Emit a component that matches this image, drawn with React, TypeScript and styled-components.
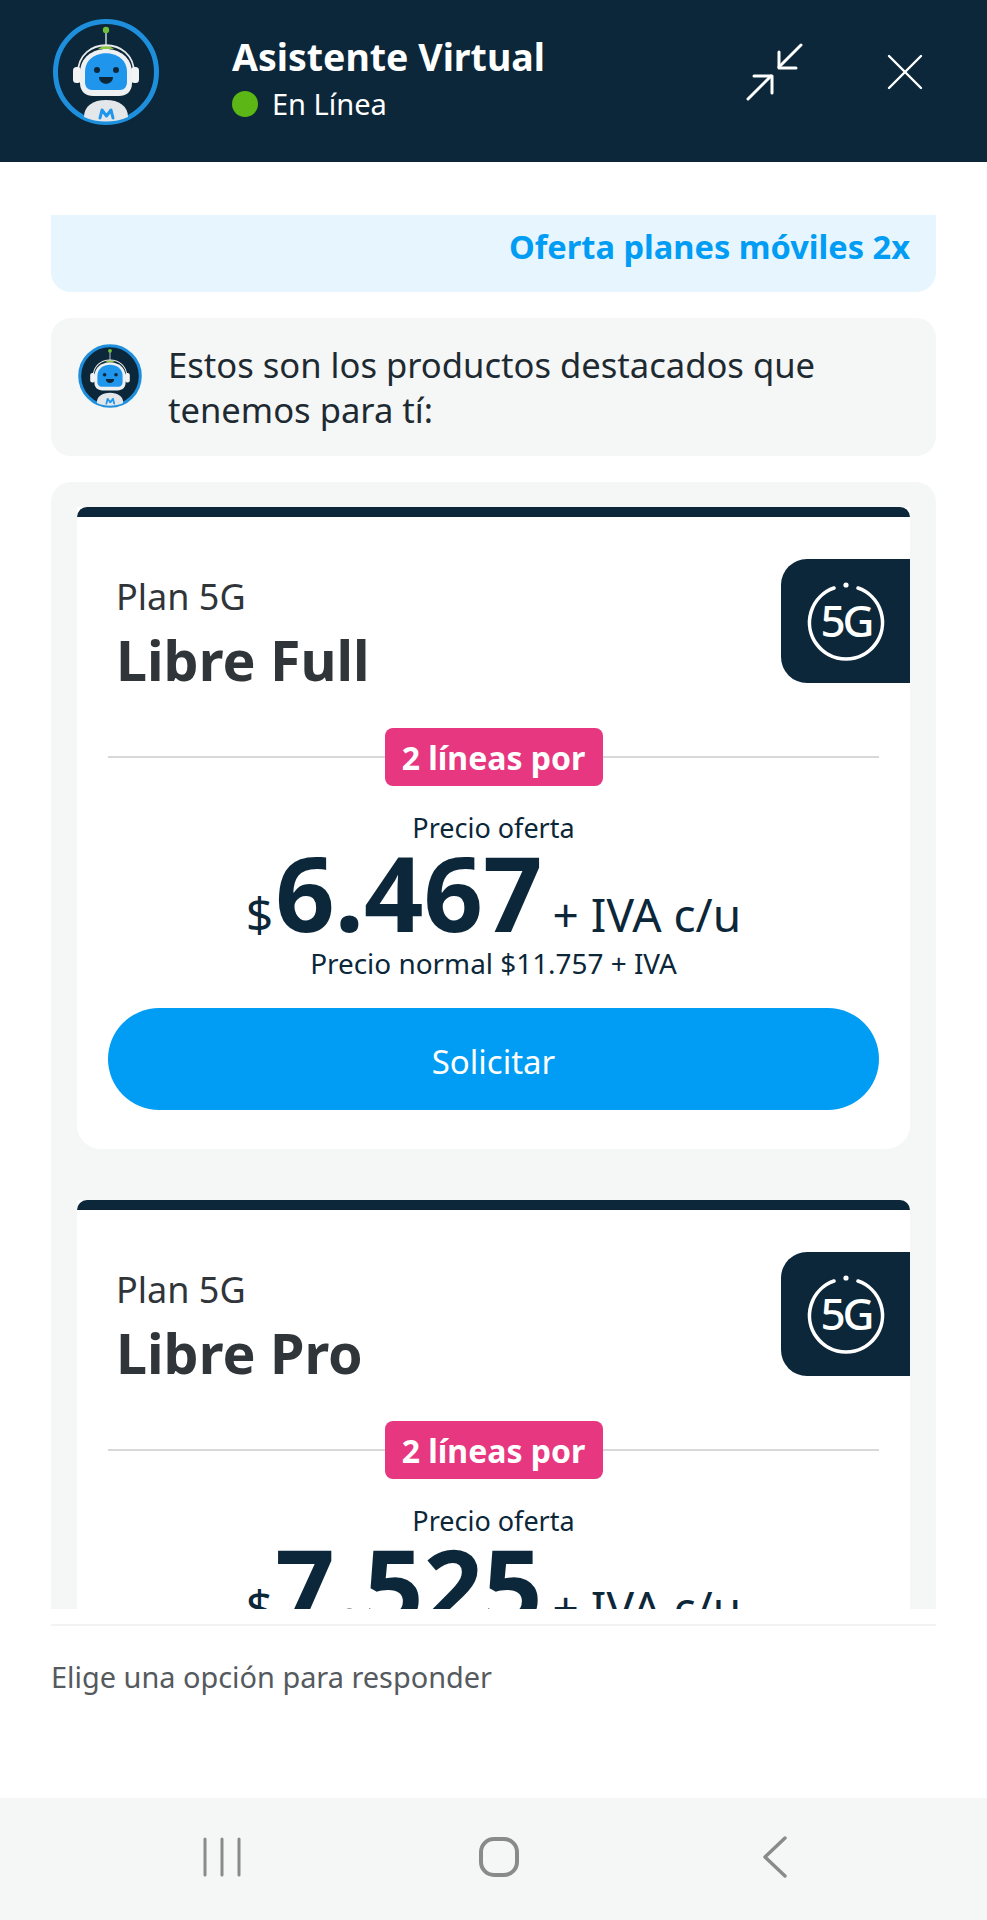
import styled, { createGlobalStyle } from "styled-components";

const NAVY = "#0b2739";
const BLUE = "#019df4";
const GRAY_BG = "#f5f6f6";
const FONT = '"Noto Sans", "Open Sans", sans-serif';

const plans = [
  { name: "Libre Full", price: "6.467", normal: "$11.757" },
  { name: "Libre Pro", price: "7.525", normal: "$13.682" },
];

function RobotAvatar({ size, ringWidth }: { size: number; ringWidth: number }) {
  return (
    <svg width={size} height={size} viewBox="0 0 110 110" aria-hidden="true">
      <circle cx="55" cy="55" r={53 - ringWidth / 2} fill={NAVY} stroke="#1e8fdc" strokeWidth={ringWidth} />
      <line x1="55" y1="15" x2="55" y2="29" stroke="#9aa7ad" strokeWidth="2" />
      <circle cx="55" cy="13" r="3.2" fill="#6fbf3a" />
      <path d="M47 32 Q55 25 63 32 Z" fill="#8cc63f" />
      <path d="M27 56 C27 19 83 19 83 56" fill="none" stroke="#e8eaec" strokeWidth="1.8" />
      <rect x="22" y="50" width="8" height="16" rx="3.5" fill="#f2f3f4" />
      <rect x="80" y="50" width="8" height="16" rx="3.5" fill="#f2f3f4" />
      <path d="M29 56 C29 24 81 24 81 56 V66 C81 75 75 79 68 79 H42 C35 79 29 75 29 66 Z" fill="#eef0f2" />
      <path d="M34 55 C34 30 76 30 76 55 V65 C76 70 73 73 69 73 H41 C37 73 34 70 34 65 Z" fill="#1f96ec" />
      <circle cx="46" cy="53" r="3" fill={NAVY} />
      <circle cx="65" cy="53" r="3" fill={NAVY} />
      <path d="M48 60 H62 C62 69 48 69 48 60 Z" fill={NAVY} />
      <path d="M33 100 C33 89 42 83 55 83 C68 83 77 89 77 100 C64 106 46 106 33 100 Z" fill="#e4e7ea" />
      <path d="M49 101 L51 93 L55.5 99 L60 93 L62 101" fill="none" stroke="#1f96ec" strokeWidth="3" strokeLinejoin="round" strokeLinecap="round" />
    </svg>
  );
}

function CompressIcon() {
  return (
    <svg width="58" height="58" viewBox="0 0 58 58" fill="none" stroke="#fff" strokeWidth="3" strokeLinecap="round" strokeLinejoin="round">
      <path d="M55 2 L33 24" />
      <path d="M33 9 V25 H50" />
      <path d="M2 56 L25 33" />
      <path d="M8 33 H26 V50" />
    </svg>
  );
}

function CloseIcon() {
  return (
    <svg width="36" height="36" viewBox="0 0 36 36" fill="none" stroke="#fff" strokeWidth="2.4" strokeLinecap="round">
      <path d="M2 2 L34 34" />
      <path d="M34 2 L2 34" />
    </svg>
  );
}

function FiveGIcon() {
  return (
    <svg width="80" height="80" viewBox="0 0 80 80" fill="none">
      <path d="M28 7 A36.5 36.5 0 1 0 52 7" stroke="#fff" strokeWidth="3.6" strokeLinecap="round" />
      <circle cx="40" cy="4" r="2.6" fill="#fff" />
      <text x="40" y="56" textAnchor="middle" fill="#fff" fontFamily={FONT} fontSize="44" fontWeight="500" letterSpacing="-3">
        5G
      </text>
    </svg>
  );
}

export default function App() {
  return (
    <Screen>
      <GlobalStyle />
      <Header>
        <AvatarSlot>
          <RobotAvatar size={110} ringWidth={5} />
        </AvatarSlot>
        <HeaderText>
          <HeaderTitle>Asistente Virtual</HeaderTitle>
          <Status>
            <StatusDot />
            En Línea
          </Status>
        </HeaderText>
        <HeaderActions>
          <CompressIcon />
          <CloseIcon />
        </HeaderActions>
      </Header>

      <Chat>
        <Banner>Oferta planes móviles 2x</Banner>
        <Message>
          <MessageAvatar>
            <RobotAvatar size={66} ringWidth={5} />
          </MessageAvatar>
          <MessageText>Estos son los productos destacados que tenemos para tí:</MessageText>
        </Message>
        <Products>
          {plans.map((plan) => (
            <PlanCard key={plan.name}>
              <CardStripe />
              <PlanHead>
                <PlanTitles>
                  <PlanKind>Plan 5G</PlanKind>
                  <PlanName>{plan.name}</PlanName>
                </PlanTitles>
                <FiveGBadge>
                  <FiveGIcon />
                </FiveGBadge>
              </PlanHead>
              <DividerRow>
                <Pill>2 líneas por</Pill>
              </DividerRow>
              <OfferLabel>Precio oferta</OfferLabel>
              <PriceRow>
                <Currency>$</Currency>
                <Amount>{plan.price}</Amount>
                <PriceSuffix>+ IVA c/u</PriceSuffix>
              </PriceRow>
              <NormalPrice>Precio normal {plan.normal} + IVA</NormalPrice>
              <RequestButton>Solicitar</RequestButton>
            </PlanCard>
          ))}
        </Products>
      </Chat>

      <Footer>
        <FooterHint>Elige una opción para responder</FooterHint>
      </Footer>

      <NavBar>
        <svg width="40" height="40" viewBox="0 0 40 40" stroke="#8a8a8a" strokeWidth="3" strokeLinecap="round">
          <path d="M3 2 V38 M20 2 V38 M37 2 V38" />
        </svg>
        <svg width="42" height="40" viewBox="0 0 42 40" fill="none" stroke="#8a8a8a" strokeWidth="4">
          <rect x="3" y="2" width="36" height="36" rx="13" />
        </svg>
        <svg width="32" height="42" viewBox="0 0 32 42" fill="none" stroke="#8a8a8a" strokeWidth="3.4" strokeLinecap="round" strokeLinejoin="round">
          <path d="M30 2 L10 21 L30 40" />
        </svg>
      </NavBar>
    </Screen>
  );
}

const GlobalStyle = createGlobalStyle`
  html, body {
    margin: 0;
    padding: 0;
    background: #fff;
  }

  * {
    box-sizing: border-box;
  }
`;

const Screen = styled.div`
  width: 987px;
  height: 1920px;
  display: flex;
  flex-direction: column;
  overflow: hidden;
  font-family: ${FONT};
  color: ${NAVY};
`;

const Header = styled.header`
  flex: none;
  height: 162px;
  padding: 0 64px 0 51px;
  display: flex;
  align-items: center;
  background: ${NAVY};
`;

const AvatarSlot = styled.div`
  display: flex;
  margin-top: -18px;
`;

const HeaderText = styled.div`
  margin-left: 71px;
  margin-top: -5px;
  flex: 1;
  display: flex;
  flex-direction: column;
`;

const HeaderTitle = styled.div`
  font-size: 37.5px;
  line-height: 50px;
  font-weight: 700;
  color: #fff;
`;

const Status = styled.div`
  display: flex;
  align-items: center;
  gap: 14px;
  font-size: 29px;
  line-height: 44px;
  color: #fff;
`;

const StatusDot = styled.span`
  width: 26px;
  height: 26px;
  border-radius: 50%;
  background: #5cb615;
`;

const HeaderActions = styled.div`
  display: flex;
  align-items: center;
  gap: 83px;
  margin-top: -18px;
`;

const Chat = styled.main`
  flex: none;
  height: 1447px;
  padding: 53px 51px 0;
  display: flex;
  flex-direction: column;
  gap: 26px;
  overflow: hidden;
`;

const Banner = styled.div`
  flex: none;
  height: 77px;
  padding: 0 26px 14px;
  display: flex;
  align-items: center;
  justify-content: flex-end;
  background: #e6f5fe;
  border-radius: 0 0 20px 20px;
  font-size: 32.6px;
  font-weight: 700;
  color: ${BLUE};
`;

const Message = styled.div`
  flex: none;
  height: 138px;
  padding: 0 26px;
  display: flex;
  align-items: center;
  gap: 25px;
  background: ${GRAY_BG};
  border-radius: 20px;
`;

const MessageAvatar = styled.div`
  flex: none;
  display: flex;
  margin-top: -22px;
`;

const MessageText = styled.p`
  margin: 0;
  max-width: 680px;
  font-size: 34.6px;
  line-height: 45px;
  color: #1e2a32;
`;

const Products = styled.section`
  flex: 1;
  min-height: 0;
  padding: 25px 26px 0;
  display: flex;
  flex-direction: column;
  gap: 51px;
  background: ${GRAY_BG};
  border-radius: 20px 20px 0 0;
  overflow: hidden;
`;

const PlanCard = styled.article`
  flex: none;
  height: 642px;
  display: flex;
  flex-direction: column;
  align-items: center;
  background: #fff;
  border-radius: 0 0 24px 24px;
`;

const CardStripe = styled.div`
  align-self: stretch;
  height: 10px;
  background: ${NAVY};
  border-radius: 12px 12px 0 0;
`;

const PlanHead = styled.div`
  align-self: stretch;
  margin-top: 42px;
  padding-left: 39px;
  display: flex;
  justify-content: space-between;
  align-items: flex-start;
`;

const PlanTitles = styled.div`
  display: flex;
  flex-direction: column;
  padding-top: 16px;
`;

const PlanKind = styled.div`
  font-size: 36px;
  line-height: 44px;
  color: #30353a;
`;

const PlanName = styled.div`
  margin-top: 5px;
  font-size: 55.5px;
  line-height: 72px;
  font-weight: 700;
  color: #30353a;
`;

const FiveGBadge = styled.div`
  width: 129px;
  height: 124px;
  display: flex;
  align-items: center;
  justify-content: center;
  background: ${NAVY};
  border-radius: 26px 0 0 26px;
`;

const DividerRow = styled.div`
  align-self: stretch;
  margin: 32px 31px 0;
  display: flex;
  justify-content: center;
  background: linear-gradient(#d6d8da, #d6d8da) center / 100% 2px no-repeat;
`;

const Pill = styled.div`
  width: 218px;
  height: 58px;
  display: flex;
  align-items: center;
  justify-content: center;
  background: #e63780;
  border-radius: 8px;
  font-size: 32px;
  font-weight: 700;
  color: #fff;
`;

const OfferLabel = styled.div`
  margin-top: 23px;
  font-size: 27px;
  line-height: 38px;
`;

const PriceRow = styled.div`
  display: flex;
  align-items: baseline;
  margin-top: -1px;
  height: 97px;
  line-height: 92px;
`;

const Currency = styled.span`
  font-size: 48px;
  margin-right: 2px;
`;

const Amount = styled.span`
  font-size: 104px;
  font-weight: 700;
`;

const PriceSuffix = styled.span`
  margin-left: 10px;
  font-size: 46px;
`;

const NormalPrice = styled.div`
  font-size: 27.9px;
  line-height: 40px;
`;

const RequestButton = styled.button`
  align-self: stretch;
  margin: 25px 31px 0;
  height: 102px;
  padding: 4px 0 0;
  border: 0;
  border-radius: 51px;
  background: ${BLUE};
  font-family: inherit;
  font-size: 33px;
  color: #fff;
`;

const Footer = styled.footer`
  flex: none;
  height: 174px;
  margin: 15px 51px 0;
  padding-top: 31px;
  border-top: 2px solid #f2f3f3;
`;

const FooterHint = styled.div`
  font-size: 28.9px;
  line-height: 40px;
  color: #555a5e;
`;

const NavBar = styled.nav`
  flex: none;
  height: 122px;
  padding: 0 200px 4px 202px;
  display: flex;
  align-items: center;
  justify-content: space-between;
  background: ${GRAY_BG};
`;
